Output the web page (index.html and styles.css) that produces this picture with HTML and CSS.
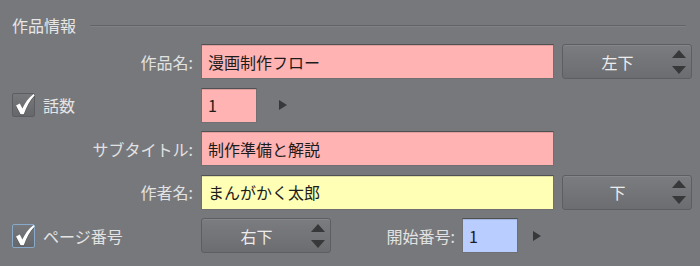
FILE: index.html
```html
<!DOCTYPE html>
<html lang="ja">
<head>
<meta charset="utf-8">
<link rel="stylesheet" href="styles.css">
</head>
<body>
<div class="panel">
  <div class="section-head">
    <span class="section-title">作品情報</span>
    <span class="rule"></span>
  </div>
  <div class="form">
    <span class="lbl">作品名:</span>
    <div class="field pink">漫画制作フロー</div>
    <div class="select"><span class="select-text">左下</span><span class="spin"><i class="up"></i><i class="down"></i></span></div>

    <div class="check-row">
      <span class="checkbox"><svg viewBox="0 0 24 24" width="24" height="24"><path d="M4 13.4 L7.8 11.4 L10.4 16.6 C12.8 11.2 16.2 6.2 21.6 2 L22.6 3.4 C17.6 8.6 14.4 14.6 11.8 22.2 L8.6 22.2 Z" fill="#ffffff"/></svg></span>
      <span class="check-text">話数</span>
    </div>
    <div class="inline">
      <div class="field pink num">1</div>
      <span class="play play-wide"></span>
    </div>
    <div></div>

    <span class="lbl">サブタイトル:</span>
    <div class="field pink">制作準備と解説</div>
    <div></div>

    <span class="lbl">作者名:</span>
    <div class="field yellow">まんがかく太郎</div>
    <div class="select"><span class="select-text">下</span><span class="spin"><i class="up"></i><i class="down"></i></span></div>

    <div class="check-row">
      <span class="checkbox focus"><svg viewBox="0 0 24 24" width="24" height="24"><path d="M4 13.4 L7.8 11.4 L10.4 16.6 C12.8 11.2 16.2 6.2 21.6 2 L22.6 3.4 C17.6 8.6 14.4 14.6 11.8 22.2 L8.6 22.2 Z" fill="#ffffff"/></svg></span>
      <span class="check-text">ページ番号</span>
    </div>
    <div class="inline end-pad">
      <div class="select short"><span class="select-text">右下</span><span class="spin"><i class="up"></i><i class="down"></i></span></div>
      <span class="lbl grow">開始番号:</span>
      <div class="field blue num">1</div>
      <span class="play"></span>
    </div>
    <div></div>
  </div>
</div>
</body>
</html>
```
FILE: styles.css
```css
html, body {
  margin: 0;
  padding: 0;
  background: #77787b;
}
body {
  width: 700px;
  height: 266px;
  overflow: hidden;
  font-family: "Noto Sans CJK JP", "Noto Sans", sans-serif;
  font-size: 16px;
  color: #e4e4e4;
}
.panel {
  padding: 10px 0 0 12px;
}
.section-head {
  display: flex;
  align-items: center;
  height: 30px;
  margin-bottom: 4px;
  margin-right: 14px;
}
.section-title {
  color: #e6e6e6;
  line-height: 30px;
}
.rule {
  flex: 1;
  height: 1px;
  margin-left: 14px;
  margin-top: 1px;
  background: #636467;
  box-shadow: 0 1px 0 #7f8083;
}
.form {
  display: grid;
  grid-template-columns: 181px 353px 130px;
  grid-auto-rows: 35px;
  column-gap: 8px;
  row-gap: 8.5px;
}
.lbl {
  display: flex;
  align-items: center;
  justify-content: flex-end;
  color: #e2e2e2;
  white-space: nowrap;
}
.field {
  box-sizing: border-box;
  height: 35px;
  display: flex;
  align-items: center;
  padding-left: 6px;
  color: #1c1c1c;
  border: 1px solid #707073;
  border-top-color: #4f5052;
  box-shadow: inset 0 1px 0 rgba(0,0,0,0.12);
}
.pink { background: #ffb3b3; }
.yellow { background: #ffffb6; }
.blue { background: #b9cdff; }
.num {
  width: 56px;
  flex: none;
}
.select {
  box-sizing: border-box;
  height: 35px;
  display: flex;
  align-items: center;
  border: 1px solid #5d5e61;
  border-radius: 3px;
  background: linear-gradient(#7b7c7f, #6c6d70);
  box-shadow: inset 0 1px 0 rgba(255,255,255,0.08);
  color: #ececec;
  padding-right: 5px;
}
.select.short {
  width: 130px;
  flex: none;
}
.select-text {
  flex: 1;
  text-align: center;
}
.spin {
  display: flex;
  flex-direction: column;
  justify-content: space-between;
  height: 24px;
  width: 14px;
}
.spin i {
  display: block;
  width: 0;
  height: 0;
  border-left: 7px solid transparent;
  border-right: 7px solid transparent;
}
.spin .up { border-bottom: 8px solid #37383a; }
.spin .down { border-top: 8px solid #37383a; }
.check-row {
  display: flex;
  align-items: center;
}
.checkbox {
  box-sizing: border-box;
  width: 23px;
  height: 24px;
  border: 1px solid #5c5d60;
  border-radius: 2px;
  background: linear-gradient(#77787b, #66676a);
  display: flex;
  align-items: center;
  justify-content: center;
}
.checkbox svg {
  flex: none;
  margin-top: -2px;
  filter: drop-shadow(0 1px 0 rgba(0,0,0,0.3));
}
.checkbox.focus {
  border-color: #86a9cc;
}
.check-text {
  margin-left: 8px;
  color: #e4e4e4;
}
.inline {
  display: flex;
  align-items: center;
}
.inline.end-pad {
  padding-right: 13px;
}
.grow {
  flex: 1;
  margin-right: 7px;
}
.play {
  width: 0;
  height: 0;
  border-top: 5.5px solid transparent;
  border-bottom: 5.5px solid transparent;
  border-left: 8px solid #37383a;
  margin-left: 15px;
}
.play.play-wide {
  margin-left: 22px;
}
```
